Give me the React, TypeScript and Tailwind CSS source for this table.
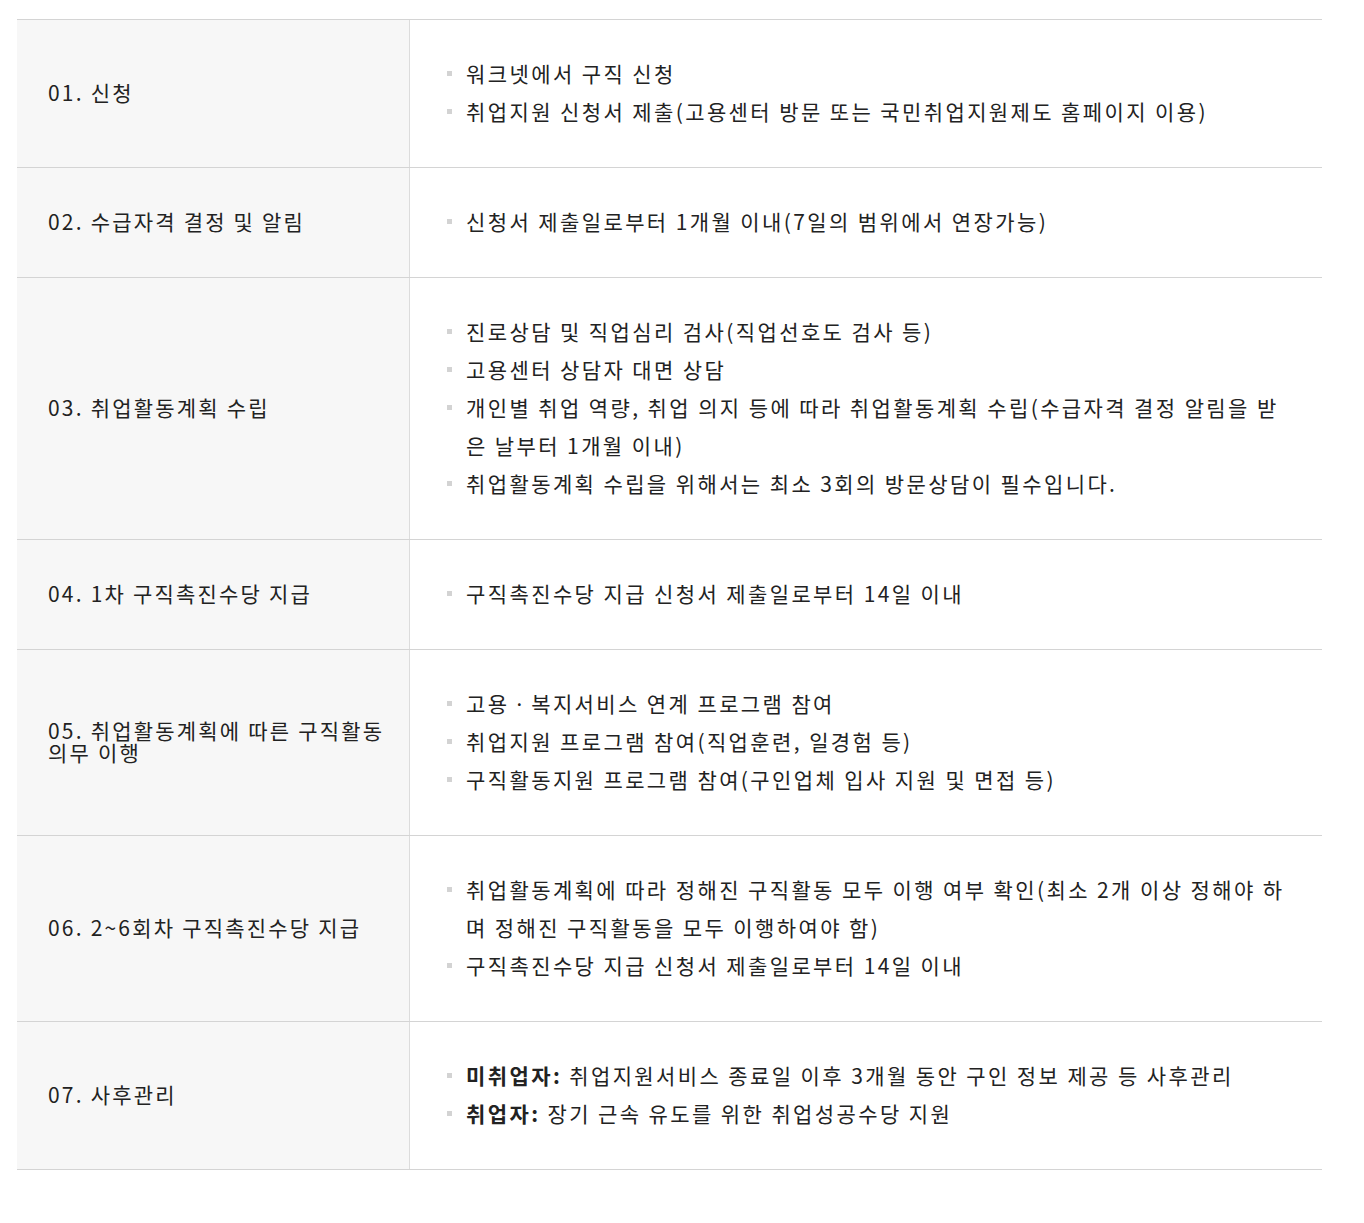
import React from 'react';

type Item = { bold?: string; text: string };
type Row = { title: string; items: Item[] };

const rows: Row[] = [
    {
        title: '01. 신청',
        items: [
            { text: '워크넷에서 구직 신청' },
            { text: '취업지원 신청서 제출(고용센터 방문 또는 국민취업지원제도 홈페이지 이용)' },
        ],
    },
    {
        title: '02. 수급자격 결정 및 알림',
        items: [{ text: '신청서 제출일로부터 1개월 이내(7일의 범위에서 연장가능)' }],
    },
    {
        title: '03. 취업활동계획 수립',
        items: [
            { text: '진로상담 및 직업심리 검사(직업선호도 검사 등)' },
            { text: '고용센터 상담자 대면 상담' },
            { text: '개인별 취업 역량, 취업 의지 등에 따라 취업활동계획 수립(수급자격 결정 알림을 받은 날부터 1개월 이내)' },
            { text: '취업활동계획 수립을 위해서는 최소 3회의 방문상담이 필수입니다.' },
        ],
    },
    {
        title: '04. 1차 구직촉진수당 지급',
        items: [{ text: '구직촉진수당 지급 신청서 제출일로부터 14일 이내' }],
    },
    {
        title: '05. 취업활동계획에 따른 구직활동 의무 이행',
        items: [
            { text: '고용ㆍ복지서비스 연계 프로그램 참여' },
            { text: '취업지원 프로그램 참여(직업훈련, 일경험 등)' },
            { text: '구직활동지원 프로그램 참여(구인업체 입사 지원 및 면접 등)' },
        ],
    },
    {
        title: '06. 2~6회차 구직촉진수당 지급',
        items: [
            { text: '취업활동계획에 따라 정해진 구직활동 모두 이행 여부 확인(최소 2개 이상 정해야 하며 정해진 구직활동을 모두 이행하여야 함)' },
            { text: '구직촉진수당 지급 신청서 제출일로부터 14일 이내' },
        ],
    },
    {
        title: '07. 사후관리',
        items: [
            { bold: '미취업자:', text: ' 취업지원서비스 종료일 이후 3개월 동안 구인 정보 제공 등 사후관리' },
            { bold: '취업자:', text: ' 장기 근속 유도를 위한 취업성공수당 지원' },
        ],
    },
];

export default function App() {
    return (
        <div
            className="min-h-screen bg-white px-[17px] pt-[19px] text-[#222]"
            style={{ fontFamily: '"Noto Sans CJK KR", "Noto Sans", sans-serif' }}
        >
            <div className="w-[1305px] border-t border-[#d4d4d4]">
                {rows.map((row) => (
                    <div key={row.title} className="flex border-b border-[#d4d4d4]">
                        <div className="flex w-[393px] shrink-0 items-center border-r border-[#dcdcdc] bg-[#f7f7f7] pb-[4px] pl-[31px] pr-5 text-[21px] leading-[22px] tracking-[2.2px]">
                            <span>{row.title}</span>
                        </div>
                        <ul className="flex-1 pt-[34px] pb-[37px] pl-[37px] pr-[30px] text-[21px] leading-[38px] tracking-[2.4px]">
                            {row.items.map((it, i) => (
                                <li key={i} className="relative pl-[19px]">
                                    <span className="absolute left-0 top-[17px] h-[5px] w-[5px] bg-[#d3d3d3]" />
                                    {it.bold && <b className="font-bold">{it.bold}</b>}
                                    {it.text}
                                </li>
                            ))}
                        </ul>
                    </div>
                ))}
            </div>
        </div>
    );
}
